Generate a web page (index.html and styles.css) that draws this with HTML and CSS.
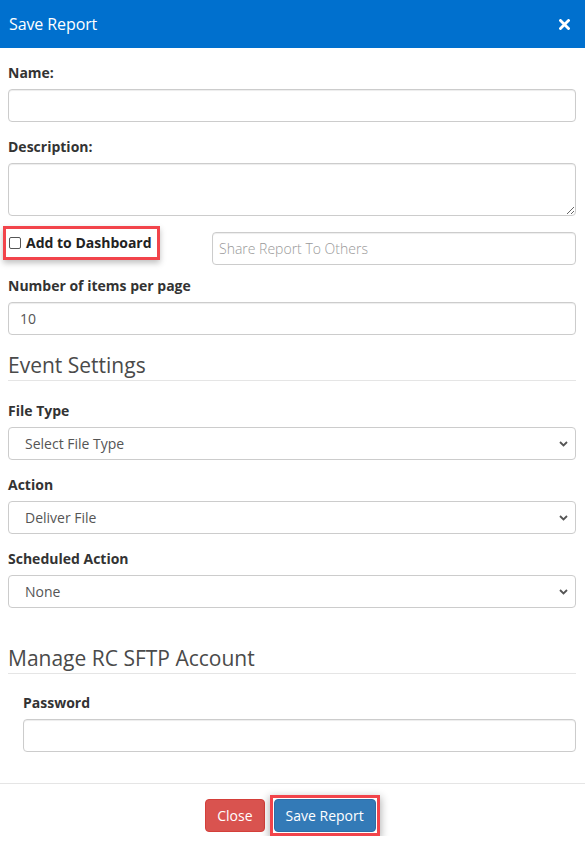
FILE: index.html
```html
<!DOCTYPE html>
<html>
<head>
<meta charset="utf-8">
<link rel="stylesheet" href="styles.css">
</head>
<body>
<div class="modal">
  <div class="modal-header">
    <span class="modal-title">Save Report</span>
    <svg class="close-x" width="11" height="11" viewBox="0 0 11 11"><path d="M1.5 1.5 L9.5 9.5 M9.5 1.5 L1.5 9.5" stroke="#fff" stroke-width="2.8" stroke-linecap="square"/></svg>
  </div>
  <div class="modal-body">
    <div class="group">
      <label class="lbl">Name:</label>
      <input class="ctrl" type="text">
    </div>
    <div class="group group-tight">
      <label class="lbl">Description:</label>
      <textarea class="ctrl area"></textarea>
    </div>
    <div class="dash-row">
      <div class="dash-col">
        <label class="dash-check"><span class="cb"></span>Add to Dashboard</label>
      </div>
      <input class="ctrl share" type="text" placeholder="Share Report To Others">
    </div>
    <div class="group">
      <label class="lbl">Number of items per page</label>
      <input class="ctrl" type="text" value="10">
    </div>
    <h3 class="legend">Event Settings</h3>
    <div class="group">
      <label class="lbl">File Type</label>
      <div class="sel"><span>Select File Type</span><svg width="9" height="6" viewBox="0 0 9 6"><path d="M1 1 L4.5 4.5 L8 1" fill="none" stroke="#555" stroke-width="1.8"/></svg></div>
    </div>
    <div class="group">
      <label class="lbl">Action</label>
      <div class="sel"><span>Deliver File</span><svg width="9" height="6" viewBox="0 0 9 6"><path d="M1 1 L4.5 4.5 L8 1" fill="none" stroke="#555" stroke-width="1.8"/></svg></div>
    </div>
    <div class="group">
      <label class="lbl">Scheduled Action</label>
      <div class="sel"><span>None</span><svg width="9" height="6" viewBox="0 0 9 6"><path d="M1 1 L4.5 4.5 L8 1" fill="none" stroke="#555" stroke-width="1.8"/></svg></div>
    </div>
    <h3 class="legend legend-2">Manage RC SFTP Account</h3>
    <div class="group indent">
      <label class="lbl">Password</label>
      <input class="ctrl" type="password">
    </div>
  </div>
  <div class="modal-footer">
    <button class="btn btn-danger">Close</button>
    <span class="highlight"><button class="btn btn-primary">Save Report</button></span>
  </div>
</div>
</body>
</html>
```
FILE: styles.css
```css
* { box-sizing: border-box; }
html, body { margin: 0; padding: 0; background: #fff; }
body {
  font-family: "Open Sans", "Liberation Sans", sans-serif;
  font-size: 14px;
  line-height: 20px;
  color: #333;
  width: 585px;
}
.modal-header {
  height: 48px;
  background: #0070ce;
  display: flex;
  align-items: center;
  justify-content: space-between;
  padding: 0 15px 0 9px;
}
.modal-title {
  color: #fff;
  font-size: 16px;
  font-weight: 400;
  letter-spacing: -0.1px;
}
.close-x { display: block; }
.modal-body {
  padding: 15px 9px 31px 8px;
}
.group { margin-bottom: 15px; }
.group-tight { margin-bottom: 10px; }
.lbl {
  display: block;
  font-weight: 700;
  font-size: 14px;
  line-height: 20px;
  margin-bottom: 6px;
  color: #333;
}
.ctrl {
  display: block;
  width: 100%;
  height: 33px;
  border: 1px solid #ccc;
  border-radius: 4px;
  box-shadow: inset 0 1px 1px rgba(0,0,0,.075);
  padding: 0 11px;
  font-family: "Open Sans", "Liberation Sans", sans-serif;
  font-size: 14px;
  color: #555;
  background: #fff;
  outline: none;
}
.area { height: 53px; resize: vertical; }
.ctrl::placeholder { color: #999; font-weight: 300; }
.dash-row {
  display: flex;
  align-items: flex-start;
  height: 40px;
  margin-bottom: 10px;
}
.dash-col { width: 204px; flex: none; }
.dash-check {
  display: inline-flex;
  align-items: center;
  margin-left: -5px;
  height: 34px;
  width: 157px;
  border: 3px solid #f2444b;
  box-shadow: 0 3px 6px rgba(0,0,0,.25);
  padding: 0 0 0 3px;
  font-weight: 700;
  color: #222;
}
.cb {
  width: 12px;
  height: 12px;
  border: 1px solid #555;
  border-radius: 2px;
  margin-right: 5px;
  background: #fff;
  flex: none;
}
.share { flex: 1; margin-top: 6px; width: auto; padding-left: 6px; }
.legend {
  margin: 15px 0 20px;
  font-size: 21px;
  font-weight: 400;
  line-height: 30px;
  color: #4a4a4a;
  border-bottom: 1px solid #e5e5e5;
}
.legend-2 { margin-top: 35px; margin-bottom: 19px; }
.sel {
  height: 33px;
  border: 1px solid #ccc;
  border-radius: 4px;
  display: flex;
  align-items: center;
  justify-content: space-between;
  padding: 0 7px 0 16px;
  color: #555;
}
.sel svg { display: block; }
.indent { margin-left: 15px; margin-bottom: 0; }
.modal-footer {
  border-top: 1px solid #e5e5e5;
  padding: 11px 15px 0;
  display: flex;
  justify-content: center;
  align-items: flex-start;
  gap: 5px;
}
.btn {
  height: 33px;
  border-radius: 4px;
  border: 1px solid transparent;
  color: #fff;
  font-family: "Open Sans", "Liberation Sans", sans-serif;
  font-size: 14px;
  line-height: 20px;
  padding: 0 11px;
  white-space: nowrap;
  display: block;
}
.btn-danger { background: #d9534f; border-color: #d43f3a; margin-top: 4px; }
.highlight {
  display: block;
  border: 3px solid #f2444b;
  padding: 1px;
  box-shadow: 0 3px 8px 1px rgba(0,0,0,.3);
  background: #fff;
}
.btn-primary {
  background: #337ab7;
  border-color: #2e6da4;
}
```
